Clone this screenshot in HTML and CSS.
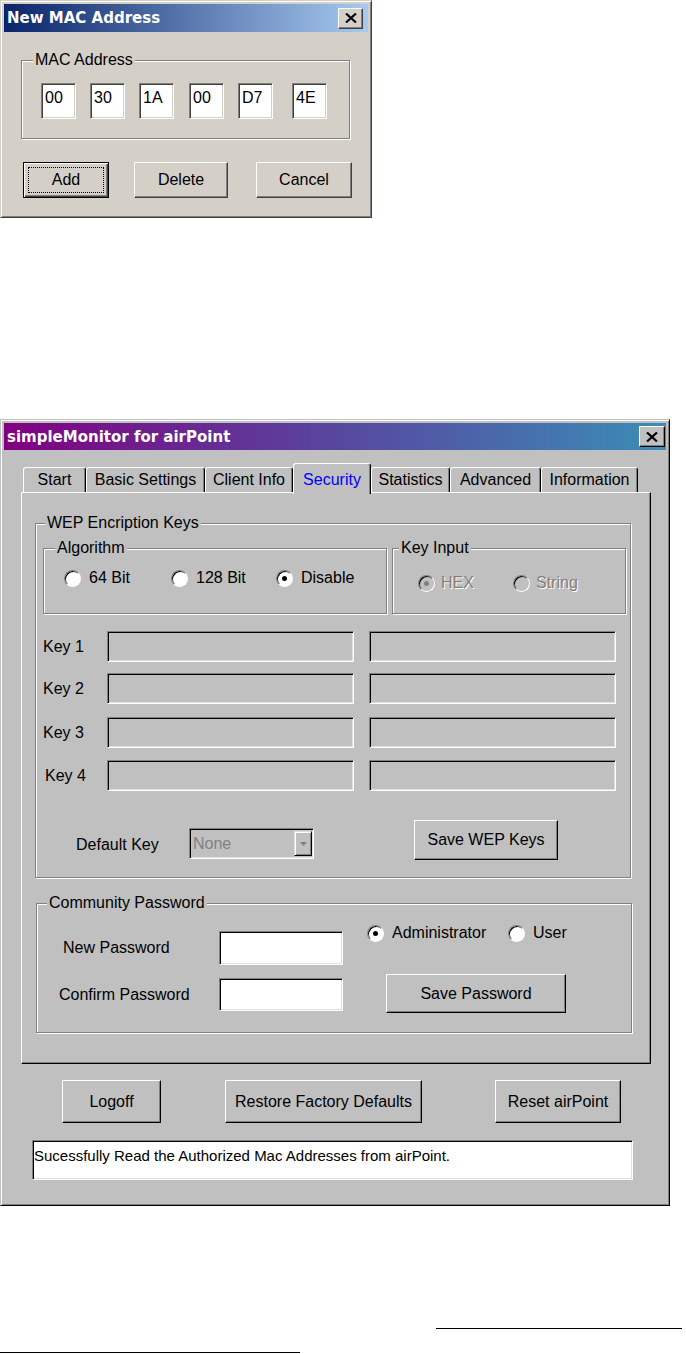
FILE: index.html
```html
<!DOCTYPE html>
<html lang="en">

<head>
    <meta charset="UTF-8">
    <title>simpleMonitor for airPoint</title>
    <link rel="stylesheet" href="styles.css">
</head>

<body>
    <!-- New MAC Address dialog -->
    <div class="window mac">
        <div class="titlebar mac-titlebar">
            <span>New MAC Address</span>
            <span class="close">
                <svg width="12" height="10" viewBox="0 0 12 10"><path d="M1 0.5 L11 9.5 M11 0.5 L1 9.5" stroke="#000" stroke-width="2.2" fill="none"/></svg>
            </span>
        </div>

        <div class="group mac-group">
            <div class="group-title">MAC Address</div>
            <div class="octets">
                <span class="field octet">00</span>
                <span class="field octet">30</span>
                <span class="field octet">1A</span>
                <span class="field octet">00</span>
                <span class="field octet">D7</span>
                <span class="field octet">4E</span>
            </div>
        </div>

        <div class="mac-buttons">
            <button class="btn btn-default btn-add"><span class="focus">Add</span></button>
            <button class="btn btn-delete">Delete</button>
            <button class="btn btn-cancel">Cancel</button>
        </div>
    </div>

    <!-- simpleMonitor main window -->
    <div class="window monitor">
        <div class="titlebar monitor-titlebar">
            <span>simpleMonitor for airPoint</span>
            <span class="close">
                <svg width="12" height="10" viewBox="0 0 12 10"><path d="M1 0.5 L11 9.5 M11 0.5 L1 9.5" stroke="#000" stroke-width="2.2" fill="none"/></svg>
            </span>
        </div>

        <div class="tabs">
            <div class="tab" style="width:63px">Start</div>
            <div class="tab" style="width:119px">Basic Settings</div>
            <div class="tab" style="width:88px">Client Info</div>
            <div class="tab active" style="width:78px">Security</div>
            <div class="tab" style="width:79px">Statistics</div>
            <div class="tab" style="width:91px">Advanced</div>
            <div class="tab" style="width:97px">Information</div>
        </div>

        <div class="panel">
            <div class="group wep">
                <div class="group-title">WEP Encription Keys</div>

                <div class="algo-row">
                    <div class="group algo">
                        <div class="group-title">Algorithm</div>
                        <div class="options algo-options">
                            <label class="option" style="width:107px"><span class="radio"></span>64 Bit</label>
                            <label class="option" style="width:105px"><span class="radio"></span>128 Bit</label>
                            <label class="option"><span class="radio on"></span>Disable</label>
                        </div>
                    </div>
                    <div class="group keyinput">
                        <div class="group-title">Key Input</div>
                        <div class="options keyinput-options">
                            <label class="option disabled" style="width:95px"><span class="radio on"></span>HEX</label>
                            <label class="option disabled"><span class="radio"></span>String</label>
                        </div>
                    </div>
                </div>

                <div class="key-row key1">
                    <span class="key-label">Key 1</span>
                    <span class="field key-field"></span>
                    <span class="field key-field"></span>
                </div>
                <div class="key-row key2">
                    <span class="key-label">Key 2</span>
                    <span class="field key-field"></span>
                    <span class="field key-field"></span>
                </div>
                <div class="key-row key3">
                    <span class="key-label">Key 3</span>
                    <span class="field key-field"></span>
                    <span class="field key-field"></span>
                </div>
                <div class="key-row key4">
                    <span class="key-label">Key 4</span>
                    <span class="field key-field"></span>
                    <span class="field key-field"></span>
                </div>

                <div class="default-row">
                    <span class="default-label">Default Key</span>
                    <span class="field combo">
                        <span class="combo-text">None</span>
                        <span class="combo-arrow">
                            <svg width="7" height="4" viewBox="0 0 7 4"><path d="M0 0 H7 L3.5 4 Z" fill="#808080"/></svg>
                        </span>
                    </span>
                    <button class="btn btn-savewep">Save WEP Keys</button>
                </div>
            </div>

            <div class="group community">
                <div class="group-title">Community Password</div>
                <div class="pw-body">
                    <div class="pw-left">
                        <div class="pw-row pw-new">
                            <span class="pw-label">New Password</span>
                            <span class="field pw-field"></span>
                        </div>
                        <div class="pw-row pw-confirm">
                            <span class="pw-label">Confirm Password</span>
                            <span class="field pw-field"></span>
                        </div>
                    </div>
                    <div class="pw-right">
                        <div class="options">
                            <label class="option" style="width:141px"><span class="radio on"></span>Administrator</label>
                            <label class="option"><span class="radio"></span>User</label>
                        </div>
                        <button class="btn btn-savepw">Save Password</button>
                    </div>
                </div>
            </div>
        </div>

        <div class="actions">
            <button class="btn btn-logoff">Logoff</button>
            <button class="btn btn-restore">Restore Factory Defaults</button>
            <button class="btn btn-reset">Reset airPoint</button>
        </div>

        <div class="field status">Sucessfully Read the Authorized Mac Addresses from airPoint.</div>
    </div>

    <div class="rule rule-right"></div>
    <div class="rule rule-left"></div>
</body>

</html>
```

FILE: styles.css
```css
body {
    margin: 0;
    background-color: #fff;
    font-family: "Liberation Sans", Arial, sans-serif;
    font-size: 16px;
    color: #000;
}

.window {
    box-sizing: border-box;
    border: 1px solid;
    padding: 3px;
}

.mac {
    width: 372px;
    height: 218px;
    background-color: #d4d0c8;
    border-color: #d4d0c8 #404040 #404040 #d4d0c8;
    box-shadow: inset 1px 1px #fff, inset -1px -1px #808080;
}

.monitor {
    width: 670px;
    height: 787px;
    margin-top: 201px;
    background-color: #c0c0c0;
    border-color: #c0c0c0 #000 #000 #c0c0c0;
    box-shadow: inset 1px 1px #fff, inset -1px -1px #808080;
}

/* title bars */
.titlebar {
    display: flex;
    align-items: center;
    justify-content: space-between;
    color: #fff;
    font-family: "DejaVu Sans", Verdana, sans-serif;
    font-weight: bold;
    font-size: 15px;
}

.mac-titlebar {
    height: 28px;
    padding: 0 5px 0 3px;
    background: linear-gradient(90deg, #0a246a, #a6caf0);
}

.monitor-titlebar {
    height: 27px;
    padding: 0 1px 0 3px;
    background: linear-gradient(90deg, #810081 0%, #5b3f9c 45%, #3a8db6 100%);
}

.close {
    box-sizing: border-box;
    width: 25px;
    height: 21px;
    display: flex;
    align-items: center;
    justify-content: center;
    background-color: #d4d0c8;
    border: 1px solid;
    border-color: #fff #404040 #404040 #fff;
    box-shadow: inset -1px -1px #808080;
}

.monitor .close {
    width: 26px;
    background-color: #c0c0c0;
    border-color: #fff #000 #000 #fff;
}

/* common controls */
.group {
    box-sizing: border-box;
    border: 1px solid #808080;
    box-shadow: inset 1px 1px #fff, 1px 1px #fff;
}

.group-title {
    width: fit-content;
    margin-top: -10px;
    padding: 0 2px;
    line-height: 18px;
    background-color: #c0c0c0;
}

.mac .group-title {
    background-color: #d4d0c8;
}

.field {
    box-sizing: border-box;
    border: 1px solid;
    border-color: #808080 #fff #fff #808080;
    box-shadow: inset 1px 1px #000, inset -1px -1px #dfdfdf;
}

.mac .field {
    box-shadow: inset 1px 1px #404040, inset -1px -1px #d4d0c8;
}

.btn {
    box-sizing: border-box;
    display: flex;
    align-items: center;
    justify-content: center;
    padding: 0;
    margin: 0;
    font: inherit;
    color: #000;
    background-color: #c0c0c0;
    border: 1px solid;
    border-color: #fff #000 #000 #fff;
    box-shadow: inset -1px -1px #808080;
}

.mac .btn {
    background-color: #d4d0c8;
    border-color: #fff #404040 #404040 #fff;
}

.mac .btn-default {
    border-color: #000;
    box-shadow: inset 1px 1px #fff, inset -1px -1px #404040, inset -2px -2px #808080;
    padding: 4px;
}

.focus {
    flex: 1;
    align-self: stretch;
    display: flex;
    align-items: center;
    justify-content: center;
    border: 1px dotted #000;
}

.options {
    display: flex;
    align-items: center;
    height: 18px;
}

.option {
    display: flex;
    align-items: center;
    gap: 8px;
    line-height: 18px;
}

.radio {
    box-sizing: border-box;
    flex: none;
    width: 17px;
    height: 17px;
    border-radius: 50%;
    border: 1px solid;
    border-color: #808080 #fff #fff #808080;
    box-shadow: inset 1px 1px #000;
    background-color: #fff;
    display: flex;
    align-items: center;
    justify-content: center;
}

.radio.on::after {
    content: "";
    width: 5px;
    height: 5px;
    border-radius: 50%;
    background-color: #000;
}

.option.disabled {
    color: #808080;
    text-shadow: 1px 1px #fff;
}

.option.disabled .radio {
    background-color: #c0c0c0;
}

.option.disabled .radio.on::after {
    background-color: #808080;
}

/* MAC dialog */
.mac-group {
    margin: 28px 0 0 17px;
    width: 329px;
    height: 79px;
}

.mac-group .group-title {
    margin-left: 11px;
}

.octets {
    display: flex;
    gap: 14px;
    margin: 14px 0 0 19px;
}

.octet {
    width: 35px;
    height: 36px;
    padding: 5px 0 0 3px;
    line-height: 18px;
    background-color: #fff;
}

.octet:nth-child(4) {
    margin-left: 1px;
}

.octet:nth-child(6) {
    margin-left: 5px;
}

.mac-buttons {
    display: flex;
    margin: 23px 0 0 19px;
}

.btn-add {
    width: 86px;
    height: 36px;
}

.btn-delete {
    width: 94px;
    height: 36px;
    margin-left: 25px;
}

.btn-cancel {
    width: 96px;
    height: 36px;
    margin-left: 28px;
}

/* tabs */
.tabs {
    display: flex;
    align-items: flex-end;
    height: 29px;
    margin: 13px 0 0 19px;
}

.tab {
    box-sizing: border-box;
    height: 25px;
    border: 1px solid;
    border-bottom: none;
    border-color: #fff #000 transparent #fff;
    border-radius: 3px 3px 0 0;
    box-shadow: inset -1px 0 #808080;
    text-align: center;
    line-height: 23px;
    background-color: #c0c0c0;
}

.tab.active {
    position: relative;
    z-index: 1;
    height: 31px;
    margin-bottom: -2px;
    padding-top: 4px;
    color: #0000ff;
}

.panel {
    box-sizing: border-box;
    width: 630px;
    height: 572px;
    margin-left: 17px;
    border: 1px solid;
    border-color: #fff #000 #000 #fff;
    box-shadow: inset -1px -1px #808080;
}

/* WEP keys */
.wep {
    margin: 30px 0 0 13px;
    width: 596px;
    height: 355px;
}

.wep > .group-title {
    margin-left: 9px;
}

.algo-row {
    display: flex;
    gap: 5px;
    margin: 16px 0 0 7px;
}

.algo {
    width: 344px;
    height: 66px;
}

.algo .group-title {
    margin-left: 11px;
}

.keyinput {
    width: 234px;
    height: 66px;
}

.keyinput .group-title {
    margin-left: 6px;
}

.algo-options {
    margin: 12px 0 0 20px;
}

.keyinput-options {
    margin: 17px 0 0 25px;
}

.keyinput .option {
    gap: 6px;
}

.key-row {
    display: flex;
    align-items: center;
    height: 31px;
    margin-left: 7px;
}

.key1 {
    margin-top: 17px;
}

.key2 {
    margin-top: 11px;
}

.key3 {
    margin-top: 13px;
}

.key4 {
    margin-top: 12px;
}

.key-label {
    width: 64px;
    line-height: 18px;
}

.key4 .key-label {
    width: 62px;
    padding-left: 2px;
}

.key-field {
    width: 247px;
    height: 31px;
    background-color: #c0c0c0;
}

.key-field + .key-field {
    margin-left: 15px;
}

.default-row {
    display: flex;
    align-items: flex-start;
    margin: 29px 0 0 40px;
}

.default-label {
    width: 113px;
    margin-top: 16px;
    line-height: 18px;
}

.combo {
    display: flex;
    align-items: center;
    width: 125px;
    height: 31px;
    margin-top: 8px;
    background-color: #c0c0c0;
}

.combo-text {
    padding-left: 3px;
    color: #808080;
    line-height: 18px;
}

.combo-arrow {
    box-sizing: border-box;
    width: 18px;
    height: 25px;
    margin: 0 1px 0 auto;
    display: flex;
    align-items: center;
    justify-content: center;
    border: 1px solid;
    border-color: #dfdfdf #000 #000 #dfdfdf;
    box-shadow: inset 1px 1px #fff, inset -1px -1px #808080;
}

.btn-savewep {
    width: 144px;
    height: 40px;
    margin-left: 100px;
}

/* community password */
.community {
    margin: 25px 0 0 14px;
    width: 596px;
    height: 130px;
}

.community > .group-title {
    margin-left: 10px;
}

.pw-body {
    display: flex;
}

.pw-left {
    width: 306px;
}

.pw-row {
    display: flex;
    align-items: center;
}

.pw-new {
    margin-top: 19px;
    height: 34px;
}

.pw-confirm {
    margin-top: 13px;
    height: 33px;
}

.pw-label {
    box-sizing: border-box;
    width: 182px;
    padding-left: 26px;
    line-height: 18px;
}

.pw-confirm .pw-label {
    padding-left: 22px;
}

.pw-field {
    width: 124px;
    height: 100%;
    background-color: #fff;
}

.pw-right {
    padding-left: 24px;
}

.pw-right .options {
    margin-top: 12px;
}

.btn-savepw {
    width: 180px;
    height: 39px;
    margin: 32px 0 0 19px;
}

/* bottom */
.actions {
    display: flex;
    margin: 16px 0 0 58px;
}

.btn-logoff {
    width: 99px;
    height: 43px;
}

.btn-restore {
    width: 197px;
    height: 43px;
    margin-left: 64px;
}

.btn-reset {
    width: 126px;
    height: 43px;
    margin-left: 73px;
}

.status {
    width: 601px;
    height: 40px;
    margin: 17px 0 0 28px;
    padding: 6px 0 0 1px;
    font-size: 15px;
    line-height: 18px;
    background-color: #fff;
}

.rule {
    height: 1px;
    background-color: #000;
}

.rule-right {
    width: 246px;
    margin: 122px 0 0 436px;
}

.rule-left {
    width: 300px;
    margin-top: 23px;
}
```
